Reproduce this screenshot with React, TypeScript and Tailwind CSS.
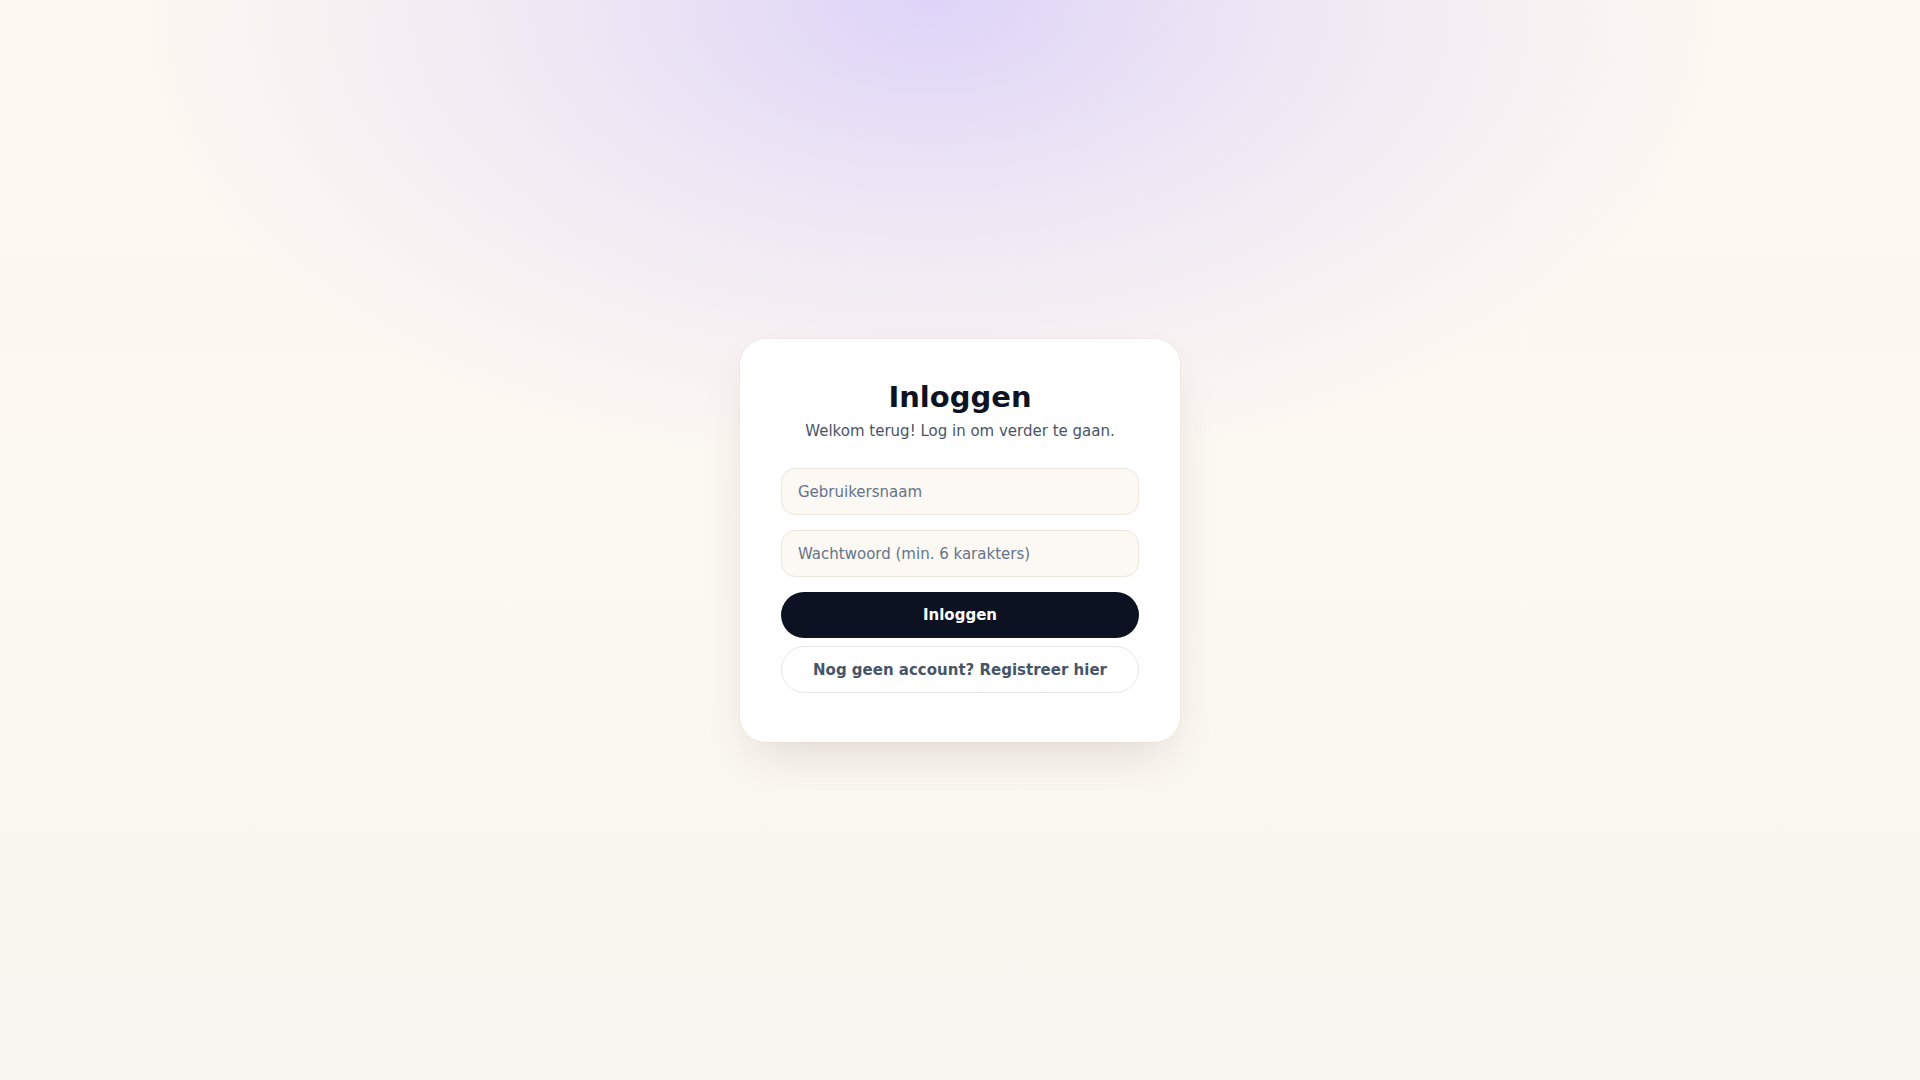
import { useState } from "react";

function LoginCard() {
  const [username, setUsername] = useState("");
  const [password, setPassword] = useState("");

  return (
    <div className="w-[440px] bg-white rounded-[26px] px-[41px] pt-10 pb-[49px] shadow-[0_22px_50px_-14px_rgba(70,50,30,0.16),0_0_0_1px_rgba(120,100,80,0.04)]">
      {/* Header */}
      <h1 className="text-center text-[29px] leading-[36px] font-bold text-[#0d1323]">
        Inloggen
      </h1>
      <p className="mt-[5px] text-center text-[15px] leading-[22px] text-[#475569]">
        Welkom terug! Log in om verder te gaan.
      </p>

      {/* Form */}
      <form className="mt-[26px] flex flex-col" onSubmit={(e) => e.preventDefault()}>
        <input
          type="text"
          value={username}
          onChange={(e) => setUsername(e.target.value)}
          placeholder="Gebruikersnaam"
          className="h-[47px] w-full rounded-[14px] border border-[#ece6df] bg-[#fcf8f3] px-4 pt-px text-[15px] text-[#0d1323] placeholder:text-[#64748b] outline-none"
        />
        <input
          type="password"
          value={password}
          onChange={(e) => setPassword(e.target.value)}
          placeholder="Wachtwoord (min. 6 karakters)"
          className="mt-[15px] h-[47px] w-full rounded-[14px] border border-[#ece6df] bg-[#fcf8f3] px-4 pt-px text-[15px] text-[#0d1323] placeholder:text-[#64748b] outline-none"
        />
        <button
          type="submit"
          className="mt-[15px] h-[46px] w-full rounded-full bg-[#0c1222] pt-[2px] text-[15px] font-bold text-white cursor-pointer"
        >
          Inloggen
        </button>
      </form>

      <button className="mt-2 h-[47px] w-full rounded-full border border-[#e6e6e8] bg-white pt-[3px] text-[15px] font-bold text-[#475569] cursor-pointer">
        Nog geen account? Registreer hier
      </button>
    </div>
  );
}

export default function App() {
  return (
    <div className="min-h-screen w-full flex items-center justify-center font-['DejaVu_Sans',sans-serif] bg-[image:radial-gradient(ellipse_800px_470px_at_930px_0px,rgba(196,181,253,0.54),rgba(196,181,253,0.22)_50%,rgba(196,181,253,0)_100%),linear-gradient(to_bottom,#fdf8f1,#faf7f2)]">
      <LoginCard />
    </div>
  );
}
